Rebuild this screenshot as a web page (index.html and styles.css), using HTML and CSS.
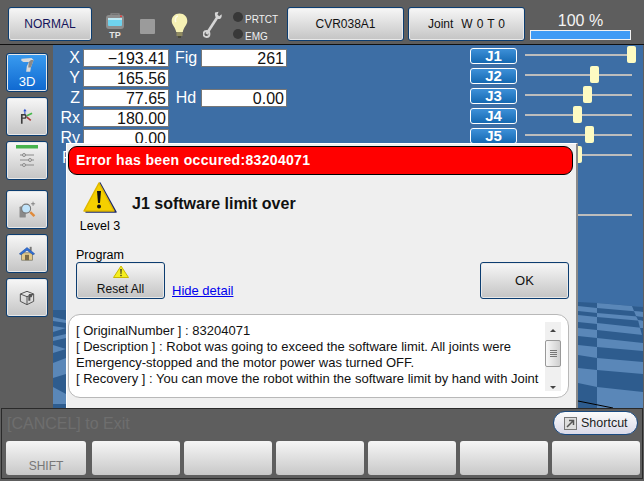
FILE: index.html
```html
<!DOCTYPE html>
<html lang="en">
<head>
    <meta charset="UTF-8">
    <meta name="viewport" content="width=device-width, initial-scale=1.0">
    <title>Teach Pendant</title>
    <link rel="stylesheet" href="styles.css">
</head>
<body>
    <div class="screen">
        <!-- Top bar -->
        <header class="topbar">
            <button class="btn mode-btn">NORMAL</button>
            <div class="tp-icon">
                <svg width="20" height="16" viewBox="0 0 20 16">
                    <path d="M6 2V0.8H14V2" fill="none" stroke="#888" stroke-width="1.2"/>
                    <rect x="1" y="2" width="18" height="14" rx="3" fill="#8d8d8d"/>
                    <rect x="3" y="5" width="14" height="8" rx="1" fill="#6fd3ee"/>
                    <rect x="3" y="5" width="14" height="2" fill="#bdeaf5"/>
                    <rect x="15" y="2.5" width="2" height="1.5" fill="#e04040"/>
                </svg>
                <span>TP</span>
            </div>
            <div class="stop-icon"></div>
            <svg class="bulb-icon" width="17" height="25" viewBox="0 0 17 25">
                <path d="M8.5 0.5C3.8 0.5 0.7 3.8 0.7 8C0.7 12 4.6 14.5 5.2 19H11.8C12.4 14.5 16.3 12 16.3 8C16.3 3.8 13.2 0.5 8.5 0.5Z" fill="#f6f1b4"/>
                <path d="M5 9C3.5 7 4.5 3.5 7 3" fill="none" stroke="#fffde6" stroke-width="1.5"/>
                <rect x="5.5" y="19" width="6" height="4" fill="#8f8a62"/>
                <rect x="7" y="23" width="3" height="2" fill="#4a4a3a"/>
            </svg>
            <svg class="wrench-icon" width="20" height="27" viewBox="0 0 20 27">
                <path d="M3.5 23L14.5 6" stroke="#d6d6d6" stroke-width="2.6"/>
                <path d="M12 1.5C11.4 5.5 13.5 8.5 17 8C18.8 6.8 19 5 18.5 3.2L16.2 5.2L14.4 3.4L15.6 0.8Z" fill="#d6d6d6"/>
                <circle cx="3.5" cy="23" r="3" fill="none" stroke="#d6d6d6" stroke-width="1.8"/>
            </svg>
            <div class="leds">
                <div class="led-row"><span class="led"></span>PRTCT</div>
                <div class="led-row"><span class="led"></span>EMG</div>
            </div>
            <button class="btn robot-btn">CVR038A1</button>
            <button class="btn joint-btn">Joint &nbsp;W 0 T 0</button>
            <div class="speed">
                <div class="speed-text">100 %</div>
                <div class="speed-bar"><div class="speed-fill"></div></div>
            </div>
        </header>

        <div class="main">
            <!-- Left side buttons -->
            <nav class="sidebar">
                <button class="btn side-btn side-active">
                    <svg width="15" height="17" viewBox="0 0 22 24">
                        <path d="M2 2L17 1L20 4L16 15L15 21H9L10 13L13 7H5L2 5Z" fill="#d9d9d9"/>
                        <path d="M13 7L16 4L20 4L16 15H12Z" fill="#8a8a8a"/>
                    </svg>
                    <span>3D</span>
                </button>
                <button class="btn side-btn">
                    <svg width="17" height="17" viewBox="0 0 26 26">
                        <path d="M9 13V4" stroke="#2a4fd0" stroke-width="1.5"/>
                        <path d="M9 1L11.5 5H6.5Z" fill="#2a4fd0"/>
                        <path d="M12 12L20 8" stroke="#44b84a" stroke-width="2.5"/>
                        <path d="M12 14L18 19" stroke="#a83a3a" stroke-width="2.5"/>
                        <path d="M3 24V9H8.5C13 9 13 16.500 8.500 16.500H5.500V24Z" fill="#3c3c3c"/>
                        <path d="M5.500 11.500V14.500H8C10 14.500 10 11.500 8 11.500Z" fill="#dcdcdc"/>
                    </svg>
                </button>
                <button class="btn side-btn">
                    <svg class="sliders-icon" width="22" height="22" viewBox="0 0 22 22">
                        <rect x="0" y="0" width="22" height="3.500" fill="#47b34d"/>
                        <g stroke="#8a8a8a" stroke-width="1" fill="#ddd">
                            <path d="M4 10H18M4 15H18M4 20H18" fill="none"/>
                            <circle cx="8" cy="10" r="1.500"/>
                            <circle cx="14" cy="15" r="1.500"/>
                            <circle cx="8" cy="20" r="1.500"/>
                        </g>
                    </svg>
                </button>
                <button class="btn side-btn side-gap">
                    <svg width="17" height="18" viewBox="0 0 24 26">
                        <rect x="0.500" y="8" width="9" height="16" rx="1" fill="#8a8a8a"/>
                        <path d="M16 16L22 22" stroke="#e08a3a" stroke-width="3.500"/>
                        <circle cx="10" cy="11" r="6.500" fill="#bfe3fa" stroke="#777" stroke-width="1.500"/>
                        <path d="M20 1V7M17 4H23" stroke="#666" stroke-width="1"/>
                    </svg>
                </button>
                <button class="btn side-btn">
                    <svg width="16" height="15" viewBox="0 0 24 22">
                        <rect x="16" y="1" width="3" height="6" fill="#777"/>
                        <rect x="4" y="10" width="16" height="11" fill="#e3c98a" stroke="#6a6a5a"/>
                        <rect x="9" y="13" width="6" height="8" fill="#7a6a48"/>
                        <path d="M0.500 11.500L12 2L23.500 11.500L21 13L12 6L3 13Z" fill="#2f6fd8" stroke="#1f4a94" stroke-width="0.800"/>
                    </svg>
                </button>
                <button class="btn side-btn">
                    <svg width="16" height="16" viewBox="0 0 24 24">
                        <g fill="none" stroke="#555" stroke-width="1.500">
                            <path d="M12 2L22 6V17L12 22L2 17V6Z"/>
                            <path d="M2 6L12 10L22 6M12 10V22"/>
                        </g>
                        <path d="M15 6H21L19 11H17V16H14V10Z" fill="#555"/>
                    </svg>
                </button>
            </nav>

            <!-- 3D view with coordinates and joint sliders -->
            <section class="view">
                <svg class="floor" width="590" height="118" viewBox="53 290 590 118">
                    <rect x="53" y="310" width="13" height="98" fill="#2e5c8e"/>
                    <g fill="#5a87b8">
                        <path d="M53 317L66 320V323L53 321Z"/>
                        <path d="M53 326L66 328L53 332Z"/>
                        <path d="M66 334L53 337V341L66 338Z"/>
                        <path d="M53 345L66 349L53 353Z"/>
                        <path d="M66 358V374L53 378V363Z"/>
                        <path d="M53 387L66 394V404H53Z"/>
                    </g>
                    <path d="M578 302L598 303L643 307V408H578Z" fill="#2e5c8e"/>
                    <g fill="#5a87b8">
                        <path d="M578 306L597 308V313L578 311Z"/>
                        <path d="M578 315L597 317V324L578 322Z"/>
                        <path d="M578 328L597 330V338L578 336Z"/>
                        <path d="M578 345L597 347V358L578 355Z"/>
                        <path d="M578 368L597 370V387L578 383Z"/>
                        <path d="M597 303L643 307V312L597 308Z"/>
                        <path d="M597 313L643 317V321L597 317Z"/>
                        <path d="M597 323L643 328V335L597 330Z"/>
                        <path d="M597 338L643 343V351L597 347Z"/>
                        <path d="M597 358L643 362V374L597 370Z"/>
                        <path d="M597 387L643 392V408H597Z"/>
                    </g>
                    <g fill="#2e5c8e">
                        <path d="M632 306L643 307V312L634 311Z"/>
                        <path d="M636 316L643 317V321L638 320Z"/>
                        <path d="M640 328L643 328V335L642 335Z"/>
                    </g>
                    <g fill="#5a87b8">
                        <path d="M634 311L643 312V317L636 316Z"/>
                        <path d="M638 320L643 321V328L640 328Z"/>
                    </g>
                    <path d="M578 401L613 408" stroke="#000" stroke-width="1"/>
                </svg>

                <div class="coords">
                    <span class="coord-label">X</span><span class="coord-value">&minus;193.41</span>
                    <span class="coord-label extra-label">Fig</span><span class="coord-value">261</span>
                    <span class="coord-label">Y</span><span class="coord-value">165.56</span><span></span><span></span>
                    <span class="coord-label">Z</span><span class="coord-value">77.65</span>
                    <span class="coord-label extra-label">Hd</span><span class="coord-value">0.00</span>
                    <span class="coord-label">Rx</span><span class="coord-value">180.00</span><span></span><span></span>
                    <span class="coord-label">Ry</span><span class="coord-value">0.00</span><span></span><span></span>
                    <span class="coord-label coord-cut">R</span><span class="coord-value"></span><span></span><span></span>
                </div>

                <div class="joints">
                    <div class="joint-row"><div class="joint-name">J1</div><div class="track"><div class="thumb" style="left: 102px"></div></div></div>
                    <div class="joint-row"><div class="joint-name">J2</div><div class="track"><div class="thumb" style="left: 65px"></div></div></div>
                    <div class="joint-row"><div class="joint-name">J3</div><div class="track"><div class="thumb" style="left: 58px"></div></div></div>
                    <div class="joint-row"><div class="joint-name">J4</div><div class="track"><div class="thumb" style="left: 48px"></div></div></div>
                    <div class="joint-row"><div class="joint-name">J5</div><div class="track"><div class="thumb" style="left: 60px"></div></div></div>
                    <div class="joint-row"><div class="joint-name"></div><div class="track"><div class="thumb" style="left: 48px"></div></div></div>
                    <div class="joint-row"></div>
                    <div class="joint-row"></div>
                    <div class="joint-row"><div class="joint-name"></div><div class="track"></div></div>
                </div>

                <!-- Error dialog -->
                <div class="dialog">
                    <div class="dialog-title">Error has been occured:83204071</div>
                    <div class="dialog-summary">
                        <div class="level">
                            <svg width="34" height="32" viewBox="0 0 34 32">
                                <path d="M17 1L33 30H3Z" fill="#1d2a6b" stroke="#1d2a6b" stroke-width="1.500" stroke-linejoin="round"/>
                                <path d="M16 1L31 29H1Z" fill="#f5d000" stroke="#e0b800" stroke-width="1.500" stroke-linejoin="round"/>
                                <path d="M14 9H18L17 21H15Z" fill="#111"/>
                                <circle cx="16" cy="24.500" r="2" fill="#111"/>
                            </svg>
                            <div>Level 3</div>
                        </div>
                        <div class="error-name">J1 software limit over</div>
                    </div>
                    <div class="program-label">Program</div>
                    <div class="dialog-actions">
                        <button class="btn reset-btn">
                            <svg width="16" height="13" viewBox="0 0 16 13">
                                <path d="M8 1L15.500 12.500H0.500Z" fill="#f5ee20" stroke="#c9b800" stroke-linejoin="round"/>
                                <path d="M7.300 4H8.700L8.400 9H7.600Z" fill="#222"/>
                                <rect x="7.400" y="9.800" width="1.200" height="1.400" fill="#222"/>
                            </svg>
                            <span>Reset All</span>
                        </button>
                        <a class="hide-link" href="#">Hide detail</a>
                        <button class="btn ok-btn">OK</button>
                    </div>
                    <div class="detail">
                        <div class="detail-text">
                            [ OriginalNumber ] : 83204071<br>
                            [ Description ] : Robot was going to exceed the software limit. All joints were<br>
                            Emergency-stopped and the motor power was turned OFF.<br>
                            [ Recovery ] : You can move the robot within the software limit by hand with Joint
                        </div>
                        <div class="scrollbar">
                            <div class="arrow-up"></div>
                            <div class="scroll-thumb"><i></i><i></i><i></i><i></i></div>
                            <div class="arrow-down"></div>
                        </div>
                    </div>
                </div>
            </section>
        </div>

        <!-- Bottom bar -->
        <footer class="bottom">
            <div class="status-row">
                <div class="status-text">[CANCEL] to Exit</div>
                <button class="shortcut">
                    <svg width="13" height="13" viewBox="0 0 13 13">
                        <rect x="0.500" y="0.500" width="12" height="12" fill="#ddd" stroke="#777"/>
                        <path d="M3 10L9 4M5 3.500H9.500V8" fill="none" stroke="#555" stroke-width="1.500"/>
                    </svg>
                    Shortcut
                </button>
            </div>
            <div class="keys">
                <button class="key key-first">SHIFT</button>
                <button class="key"></button>
                <button class="key"></button>
                <button class="key"></button>
                <button class="key"></button>
                <button class="key"></button>
                <button class="key"></button>
            </div>
        </footer>
    </div>
</body>
</html>
```

FILE: styles.css
```css
html, body {
    margin: 0;
    padding: 0;
}
body {
    background-color: #5e5e5e;
    font-family: "Liberation Sans", Arial, sans-serif;
    overflow: hidden;
}
.screen {
    width: 644px;
    height: 481px;
    display: flex;
    flex-direction: column;
}

/* Shared grey button */
.btn {
    display: block;
    padding: 0;
    margin: 0;
    border: 1px solid #0c3d70;
    border-radius: 3px;
    background: linear-gradient(#f7f7f7, #c4c4c4);
    box-shadow: inset 0 0 0 1px #e8e8e8;
    color: #111;
    font-family: inherit;
    font-size: 12px;
}

/* Top bar */
.topbar {
    height: 44px;
    border-bottom: 1px solid #111;
    display: flex;
    align-items: flex-start;
    flex-shrink: 0;
}
.mode-btn {
    width: 84px;
    height: 34px;
    margin: 7px 0 0 8px;
    color: #14145a;
}
.tp-icon {
    width: 20px;
    margin: 13px 0 0 13px;
    text-align: center;
    color: #e6e6e6;
    font-size: 9px;
    font-weight: bold;
    line-height: 10px;
}
.tp-icon svg {
    display: block;
    margin-bottom: 1px;
}
.stop-icon {
    width: 15px;
    height: 15px;
    margin: 19px 0 0 15px;
    background-color: #9b9b9b;
    border-radius: 1px;
}
.bulb-icon {
    margin: 13px 0 0 16px;
}
.wrench-icon {
    margin: 11px 0 0 15px;
}
.leds {
    width: 54px;
    margin: 11px 0 0 10px;
    color: #f0f0f0;
    font-size: 10px;
}
.led-row {
    height: 17px;
    display: flex;
    align-items: center;
    gap: 2px;
}
.led {
    width: 10px;
    height: 10px;
    margin-bottom: 6px;
    border-radius: 50%;
    background-color: #383838;
}
.robot-btn {
    width: 117px;
    height: 34px;
    margin: 7px 0 0 0;
}
.joint-btn {
    width: 117px;
    height: 34px;
    margin: 7px 0 0 4px;
    word-spacing: 0.700px;
}
.speed {
    width: 101px;
    margin: 12px 0 0 5px;
    text-align: center;
    color: #f4f4f4;
    font-size: 16px;
    line-height: 18px;
}
.speed-bar {
    height: 8px;
    border: 1px solid #f2f2f2;
}
.speed-fill {
    height: 100%;
    background-color: #3f9bf5;
}

/* Middle */
.main {
    flex: 1;
    display: flex;
    min-height: 0;
}
.sidebar {
    width: 53px;
    flex-shrink: 0;
    padding: 8px 0 0 6px;
    box-sizing: border-box;
    display: flex;
    flex-direction: column;
    gap: 5px;
}
.side-btn {
    width: 42px;
    height: 39px;
    display: flex;
    flex-direction: column;
    align-items: center;
    justify-content: center;
}
.side-gap {
    margin-top: 5px;
}
.side-active {
    background: linear-gradient(#3a9cf0, #0f68d0);
    color: #fff;
    font-size: 13px;
    line-height: 15px;
}
.sliders-icon {
    margin-bottom: 9px;
}
.view {
    position: relative;
    width: 590px;
    background-color: #3d6ea5;
    overflow: hidden;
    display: flex;
    justify-content: space-between;
    padding: 1px 0 0 0;
    box-sizing: border-box;
}
.floor {
    position: absolute;
    left: 0;
    bottom: 0;
}

/* Coordinates */
.coords {
    position: relative;
    display: grid;
    grid-template-columns: 27px 86px 26px 86px;
    grid-auto-rows: 20px;
    column-gap: 3px;
    padding-top: 3px;
    align-self: flex-start;
    color: #fff;
    font-size: 16px;
}
.coord-label {
    text-align: right;
    line-height: 18px;
}
.coord-cut {
    text-align: left;
    padding-left: 9px;
}
.coord-value {
    height: 18px;
    background-color: #fff;
    box-sizing: border-box;
    border: 1px solid #777;
    color: #111;
    line-height: 18px;
    text-align: right;
    padding-right: 2px;
}
.extra-label {
    text-align: center;
    margin-left: 2px;
}

/* Joint sliders */
.joints {
    position: relative;
    width: 173px;
}
.joint-row {
    height: 20px;
    display: flex;
    align-items: flex-start;
}
.joint-name {
    width: 47px;
    height: 16px;
    margin-top: 2px;
    box-sizing: border-box;
    border: 1px solid #fff;
    border-radius: 3px;
    background: linear-gradient(#3d90d8, #1569b2);
    color: #fff;
    font-size: 15px;
    font-weight: bold;
    line-height: 14px;
    text-align: center;
}
.track {
    position: relative;
    width: 107px;
    height: 2px;
    margin: 8px 0 0 8px;
    background-color: #bdbdbd;
}
.thumb {
    position: absolute;
    top: -8px;
    width: 9px;
    height: 17px;
    background-color: #fdfbc2;
    border-radius: 2px;
}

/* Error dialog */
.dialog {
    position: absolute;
    left: 13px;
    top: 98px;
    width: 512px;
    height: 265px;
    box-sizing: border-box;
    background-color: #efefef;
    border-top: 1px solid #fff;
    border-left: 1px solid #fff;
    border-right: 2px solid #8a8a8a;
    padding: 2px 3px 0 1px;
    display: flex;
    flex-direction: column;
}
.dialog-title {
    height: 29px;
    box-sizing: border-box;
    background-color: #f00;
    border: 1px solid #000;
    border-radius: 9px;
    color: #fff;
    font-size: 14px;
    font-weight: bold;
    letter-spacing: 0.330px;
    line-height: 26px;
    padding-left: 7px;
}
.dialog-summary {
    display: flex;
    margin-top: 7px;
    height: 60px;
}
.level {
    width: 64px;
    text-align: center;
    font-size: 12.500px;
    line-height: 14px;
    box-sizing: border-box;
}
.level svg {
    display: block;
    margin: 0 0 5px 15px;
}
.error-name {
    margin: 13px 0 0 0;
    font-size: 16px;
    font-weight: bold;
    color: #111;
}
.program-label {
    height: 14px;
    overflow: hidden;
    margin: 6px 0 0 8px;
    font-size: 12.500px;
    line-height: 14px;
}
.dialog-actions {
    display: flex;
    align-items: flex-end;
    margin-left: 8px;
}
.reset-btn {
    width: 89px;
    height: 37px;
    padding-top: 2px;
    display: flex;
    flex-direction: column;
    align-items: center;
    justify-content: flex-start;
    gap: 4px;
}
.reset-btn svg {
    display: block;
}
.hide-link {
    margin: 0 0 1px 7px;
    color: #00e;
    font-size: 13px;
}
.ok-btn {
    width: 89px;
    height: 37px;
    margin-left: auto;
    margin-right: 4px;
    font-size: 13px;
}
.detail {
    display: flex;
    height: 84px;
    margin: 15px 4px 0 0;
    box-sizing: border-box;
    background-color: #fff;
    border: 1px solid #b8b8b8;
    border-radius: 12px;
}
.detail-text {
    width: 468px;
    height: 64px;
    margin: 8px 0 0 7px;
    overflow: hidden;
    color: #111;
    font-size: 13px;
    line-height: 16px;
    white-space: nowrap;
}
.scrollbar {
    width: 16px;
    height: 69px;
    margin: 7px 0 0 1px;
    background-color: #f0f0f0;
    display: flex;
    flex-direction: column;
    align-items: center;
}
.arrow-up {
    width: 0;
    height: 0;
    margin-top: 7px;
    border-left: 3px solid transparent;
    border-right: 3px solid transparent;
    border-bottom: 3px solid #444;
}
.arrow-down {
    width: 0;
    height: 0;
    margin-top: 19px;
    border-left: 3px solid transparent;
    border-right: 3px solid transparent;
    border-top: 3px solid #444;
}
.scroll-thumb {
    width: 14px;
    height: 25px;
    margin-top: 8px;
    border: 1px solid #999;
    border-radius: 2px;
    background: linear-gradient(90deg, #f8f8f8, #cfcfcf);
    display: flex;
    flex-direction: column;
    align-items: center;
    justify-content: center;
    gap: 1px;
}
.scroll-thumb i {
    display: block;
    width: 7px;
    height: 1px;
    background-color: #777;
}

/* Bottom bar */
.bottom {
    height: 71px;
    box-sizing: border-box;
    flex-shrink: 0;
    margin: 0 1px 2px 1px;
    border: 1px solid #2a2a2a;
}
.status-row {
    height: 32px;
    display: flex;
    align-items: flex-start;
    justify-content: space-between;
}
.status-text {
    margin: 6px 0 0 5px;
    color: #6e6e6e;
    font-size: 16px;
}
.shortcut {
    width: 85px;
    height: 24px;
    margin: 2px 4px 0 0;
    padding: 0 0 0 10px;
    display: flex;
    align-items: center;
    gap: 4px;
    border: 1px solid #1b4a80;
    border-radius: 12px;
    background: linear-gradient(#fbfbfb, #d9d9e8);
    color: #222;
    font-family: inherit;
    font-size: 12.500px;
}
.keys {
    display: flex;
    padding-left: 4px;
    gap: 4px;
}
.key {
    width: 88px;
    height: 34px;
    padding: 16px 0 0 0;
    border: 0;
    border-radius: 3px;
    background: linear-gradient(#f6f6f6, #c8c8c8);
    color: #777;
    font-family: inherit;
    font-size: 12px;
}
.key-first {
    width: 80px;
    margin-right: 2px;
}
```
